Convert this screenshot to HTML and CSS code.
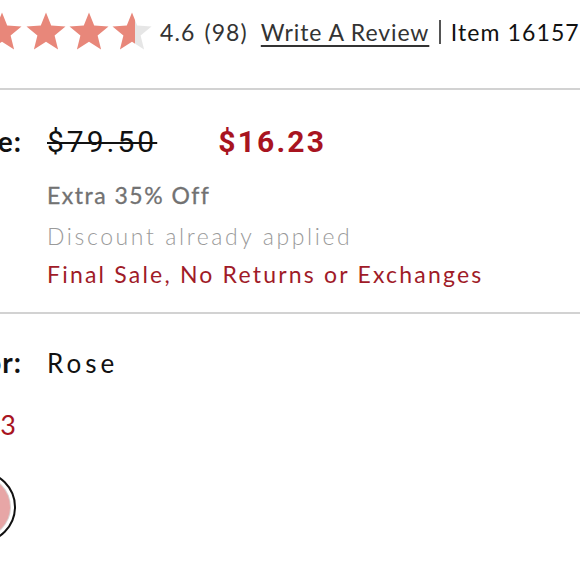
FILE: index.html
```html
<!DOCTYPE html>
<html>
<head>
<meta charset="utf-8">
<link rel="stylesheet" href="styles.css">
</head>
<body>
<div class="page">
  <div class="rating-row">
    <svg class="stars" width="217" height="42" viewBox="0 0 217 42">
      <defs>
        <path id="s" d="M21 1.5 L26.2 14.6 L40.5 15.5 L29.6 24.6 L33.1 38.5 L21 30.8 L8.9 38.5 L12.4 24.6 L1.5 15.5 L15.8 14.6 Z"/>
        <linearGradient id="half">
          <stop offset="58%" stop-color="#e8877a"/>
          <stop offset="58%" stop-color="#e6e6e6"/>
        </linearGradient>
      </defs>
      <use href="#s" x="0" fill="#e8877a"/>
      <use href="#s" x="44" fill="#e8877a"/>
      <use href="#s" x="88" fill="#e8877a"/>
      <use href="#s" x="131" fill="#e8877a"/>
      <use href="#s" x="174" fill="url(#half)"/>
    </svg>
    <span class="score">4.6</span>
    <span class="count">(98)</span>
    <a class="review-link">Write A Review</a>
    <span class="sep"></span>
    <span class="item">Item 1615793</span>
  </div>

  <div class="price-block">
    <div class="row price-row">
      <div class="label">Price:</div>
      <div class="value prices">
        <span class="old">$79.50</span>
        <span class="new">$16.23</span>
      </div>
    </div>
    <div class="row">
      <div class="label"></div>
      <div class="value notes">
        <div class="extra">Extra 35% Off</div>
        <div class="applied">Discount already applied</div>
        <div class="final">Final Sale, No Returns or Exchanges</div>
      </div>
    </div>
  </div>

  <div class="color-block">
    <div class="row color-row">
      <div class="label">Color:</div>
      <div class="value">Rose</div>
    </div>
    <div class="row swatch-price">
      <div class="label red">$16.23</div>
    </div>
    <div class="swatch-row">
      <div class="swatch"><div class="swatch-fill"></div></div>
    </div>
  </div>
</div>
</body>
</html>
```

FILE: styles.css
```css
html, body {
  margin: 0;
  padding: 0;
  background: #ffffff;
  overflow: hidden;
  width: 580px;
  height: 580px;
}

.page {
  margin-left: -100px;
  width: 800px;
  font-family: "Lato", "Liberation Sans", sans-serif;
  color: #111;
}

.rating-row {
  display: flex;
  align-items: center;
  height: 42px;
  padding-top: 11px;
  padding-left: 37px;
  font-size: 23px;
  color: #333;
  letter-spacing: 1.1px;
  white-space: nowrap;
}

.stars {
  display: block;
  flex: none;
  margin-right: 6px;
}

.score { margin-right: 9px; }
.count { margin-right: 13px; }

.review-link {
  text-decoration: underline;
  text-underline-offset: 4px;
  text-decoration-thickness: 1.5px;
  color: #333;
  letter-spacing: 0.9px;
}

.sep {
  display: inline-block;
  width: 1.5px;
  height: 24px;
  background: #555;
  margin: 0 10px 0 10px;
}

.item { color: #111; }

.price-block {
  margin-top: 35px;
  border-top: 2px solid #d2d2d2;
  border-bottom: 2px solid #d2d2d2;
  padding: 34px 0 17px;
}

.row {
  display: flex;
  align-items: baseline;
  gap: 25px;
}

.label {
  width: 122px;
  flex: none;
  text-align: right;
  font-weight: 700;
  font-size: 28px;
  letter-spacing: 1px;
  white-space: nowrap;
}

.prices {
  display: flex;
  align-items: baseline;
  gap: 61px;
  font-family: "Roboto", "Liberation Sans", sans-serif;
  font-size: 30px;
}

.old {
  text-decoration: line-through;
  text-decoration-thickness: 2px;
  color: #111;
  letter-spacing: 3px;
}

.new {
  color: #a8141f;
  font-weight: 700;
  letter-spacing: 2.2px;
}

.notes {
  padding-top: 16px;
  font-size: 23px;
  line-height: 41px;
}

.extra { color: #727272; font-weight: 400; font-size: 23px; letter-spacing: 1.5px; -webkit-text-stroke: 0.3px #727272; }
.applied { color: #9a9a9a; font-weight: 300; letter-spacing: 2.6px; }
.final { color: #a01b28; margin-top: -3px; letter-spacing: 2.2px; }

.color-block {
  padding-top: 31px;
}

.color-row .value {
  font-size: 26px;
  letter-spacing: 4px;
}

.swatch-price {
  margin-top: 29px;
}

.swatch-price .label.red {
  color: #a8141f;
  font-weight: 400;
  font-size: 27px;
  width: 117px;
}

.swatch-row {
  padding-left: 44px;
  margin-top: 30px;
}

.swatch {
  width: 72px;
  height: 72px;
  border-radius: 50%;
  box-sizing: border-box;
  border: 2.5px solid #111;
  display: flex;
  align-items: center;
  justify-content: center;
}

.swatch-fill {
  width: 60px;
  height: 60px;
  border-radius: 50%;
  background: #e7a6a6;
  box-shadow: 0 0 0 1px #d9d0d0;
}
```
